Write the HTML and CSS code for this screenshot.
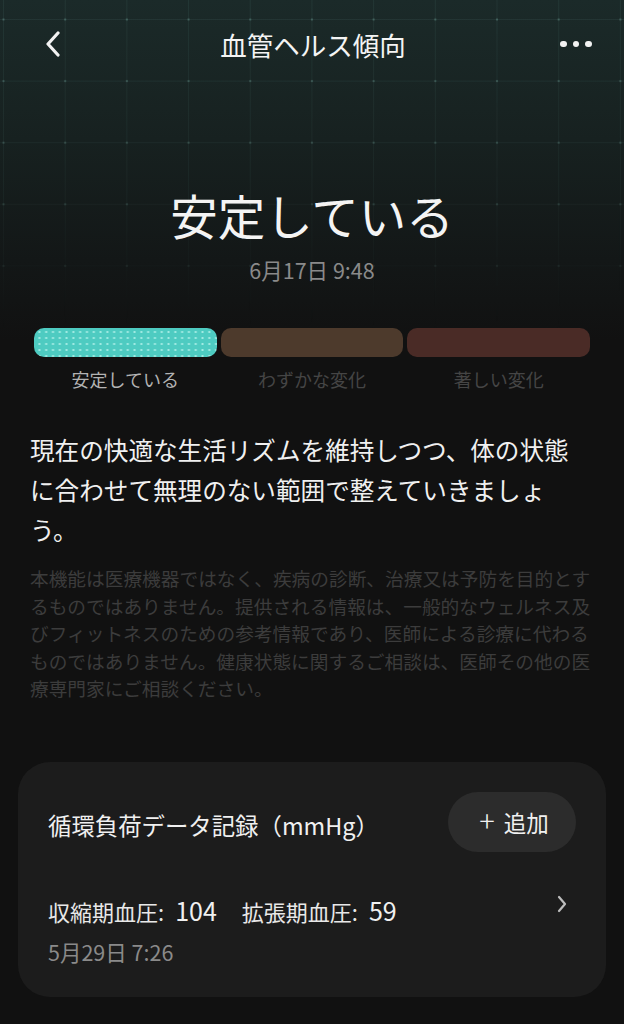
FILE: index.html
```html
<!DOCTYPE html>
<html lang="ja">
<head>
<meta charset="utf-8">
<title>血管ヘルス傾向</title>
<link rel="stylesheet" href="styles.css">
</head>
<body>
<div class="page">
  <div class="grid-bg"></div>
  <header class="nav">
    <button class="nav-btn back" aria-label="戻る">
      <svg width="16" height="26" viewBox="0 0 16 26"><path d="M13 2 L3 13 L13 24" fill="none" stroke="#f2f2f2" stroke-width="3.2" stroke-linecap="round" stroke-linejoin="round"/></svg>
    </button>
    <h1 class="nav-title">血管ヘルス傾向</h1>
    <button class="nav-btn more" aria-label="その他">
      <span class="dot"></span><span class="dot"></span><span class="dot"></span>
    </button>
  </header>

  <section class="status">
    <h2 class="status-title">安定している</h2>
    <div class="status-date">6月17日 9:48</div>
  </section>

  <section class="scale">
    <div class="scale-bar">
      <div class="seg seg-stable"></div>
      <div class="seg seg-slight"></div>
      <div class="seg seg-major"></div>
    </div>
    <div class="scale-labels">
      <span class="lbl active">安定している</span>
      <span class="lbl">わずかな変化</span>
      <span class="lbl">著しい変化</span>
    </div>
  </section>

  <p class="advice">現在の快適な生活リズムを維持しつつ、体の状態に合わせて無理のない範囲で整えていきましょう。</p>

  <p class="disclaimer">本機能は医療機器ではなく、疾病の診断、治療又は予防を目的とするものではありません。提供される情報は、一般的なウェルネス及びフィットネスのための参考情報であり、医師による診療に代わるものではありません。健康状態に関するご相談は、医師その他の医療専門家にご相談ください。</p>

  <section class="card">
    <div class="card-head">
      <h3 class="card-title">循環負荷データ記録（mmHg）</h3>
      <button class="add-btn"><span class="plus">+</span>追加</button>
    </div>
    <div class="record">
      <div class="record-main">
        <div class="values">
          <span class="v-label">収縮期血圧:</span><span class="v-num">104</span>
          <span class="v-label second">拡張期血圧:</span><span class="v-num">59</span>
        </div>
        <div class="record-date">5月29日 7:26</div>
      </div>
      <svg class="chev" width="12" height="18" viewBox="0 0 12 18"><path d="M3 2 L9 9 L3 16" fill="none" stroke="#bdbdbd" stroke-width="2.2" stroke-linecap="round" stroke-linejoin="round"/></svg>
    </div>
  </section>
</div>
</body>
</html>
```
FILE: styles.css
```css
* { box-sizing: border-box; }
html, body { margin: 0; padding: 0; }
body {
  background: #111111;
  font-family: "Noto Sans CJK JP", "Noto Sans", sans-serif;
  color: #f0f0f0;
}
.page {
  position: relative;
  width: 624px;
  min-height: 1024px;
  overflow: hidden;
  background: linear-gradient(to bottom, #1b2a29 0px, #172120 140px, #131717 260px, #111111 340px);
}
.grid-bg {
  position: absolute;
  left: 0; top: 0;
  width: 624px;
  height: 330px;
  background-image:
    radial-gradient(circle, rgba(140,200,190,0.28) 1px, transparent 1.6px),
    linear-gradient(to right, rgba(110,170,160,0.10) 1px, transparent 1px),
    linear-gradient(to bottom, rgba(110,170,160,0.10) 1px, transparent 1px);
  background-size: 61.7px 61.6px, 61.7px 61.6px, 61.7px 61.6px;
  background-position: -27.35px -11.3px, 3px 19px, 3px 19px;
  -webkit-mask-image: linear-gradient(to bottom, #000 0%, rgba(0,0,0,0.7) 50%, transparent 100%);
  mask-image: linear-gradient(to bottom, #000 0%, rgba(0,0,0,0.7) 50%, transparent 100%);
  pointer-events: none;
}
.nav {
  position: relative;
  height: 88px;
  display: flex;
  align-items: center;
  justify-content: space-between;
  padding: 0 30px 0 38px;
}
.nav-btn {
  background: none;
  border: 0;
  padding: 0;
  display: flex;
  align-items: center;
  gap: 6px;
  cursor: pointer;
}
.back { width: 30px; height: 30px; justify-content: center; }
.more { width: 36px; height: 30px; justify-content: center; }
.dot { width: 6.5px; height: 6.5px; border-radius: 50%; background: #f2f2f2; }
.nav-title {
  margin: 0;
  font-size: 26.5px;
  font-weight: 400;
  color: #f4f4f4;
}
.status {
  position: relative;
  text-align: center;
  padding-top: 96px;
}
.status-title {
  margin: 0;
  font-size: 47.5px;
  line-height: 62px;
  font-weight: 400;
  color: #f4f4f4;
}
.status-date {
  margin-top: 10px;
  font-size: 21.5px;
  line-height: 28px;
  color: #8a8a8a;
}
.scale {
  position: relative;
  margin-top: 44px;
  padding: 0 34px;
}
.scale-bar {
  display: grid;
  grid-template-columns: 1fr 1fr 1fr;
  gap: 4px;
  height: 29px;
}
.seg { border-radius: 10px; }
.seg-stable {
  background-color: #4ecbc1;
  background-image: radial-gradient(circle, rgba(190,245,238,0.75) 0.9px, transparent 1.3px);
  background-size: 6.8px 6px;
  background-position: 2px 1px;
}
.seg-slight { background: #4d3a2c; }
.seg-major { background: #4a2b26; }
.scale-labels {
  display: grid;
  grid-template-columns: 1fr 1fr 1fr;
  gap: 4px;
  margin-top: 10px;
  text-align: center;
  font-size: 18px;
  line-height: 25px;
}
.lbl { color: #454545; }
.lbl.active { color: #b3b3b3; }
.advice {
  margin: 37px 0 0;
  padding: 0 40px 0 30px;
  font-size: 24.6px;
  line-height: 40px;
  color: #f0f0f0;
}
.disclaimer {
  margin: 15px 0 0;
  padding: 0 24px 0 30px;
  font-size: 18.7px;
  line-height: 27.5px;
  color: #3c3c3c;
}
.card {
  margin: 60px 18px 0;
  background: #1c1c1c;
  border-radius: 32px;
  padding: 30px 30px 31px;
}
.card-head {
  display: flex;
  align-items: center;
  justify-content: space-between;
  height: 60px;
}
.card-title {
  margin: 0;
  font-size: 23.4px;
  font-weight: 400;
  color: #f0f0f0;
  transform: translateY(3px);
}
.add-btn {
  width: 128px;
  height: 60px;
  border: 0;
  border-radius: 30px;
  background: #2c2c2c;
  color: #f0f0f0;
  font-family: inherit;
  font-size: 22.5px;
  display: flex;
  align-items: center;
  justify-content: center;
  gap: 9px;
  padding: 0 0 0 4px;
}
.plus { font-size: 29px; font-weight: 300; line-height: 1; transform: translateY(-2px); }
.record {
  display: flex;
  align-items: flex-start;
  justify-content: space-between;
  margin-top: 43px;
}
.values {
  display: flex;
  align-items: baseline;
  height: 30px;
  line-height: 30px;
  color: #f0f0f0;
}
.v-label { font-size: 22px; color: #e8e8e8; }
.v-label.second { margin-left: 25px; }
.v-num { font-size: 25px; margin-left: 11px; }
.record-date {
  margin-top: 13px;
  font-size: 21.5px;
  line-height: 28px;
  color: #8a8a8a;
}
.chev { margin-right: 8px; }
```
